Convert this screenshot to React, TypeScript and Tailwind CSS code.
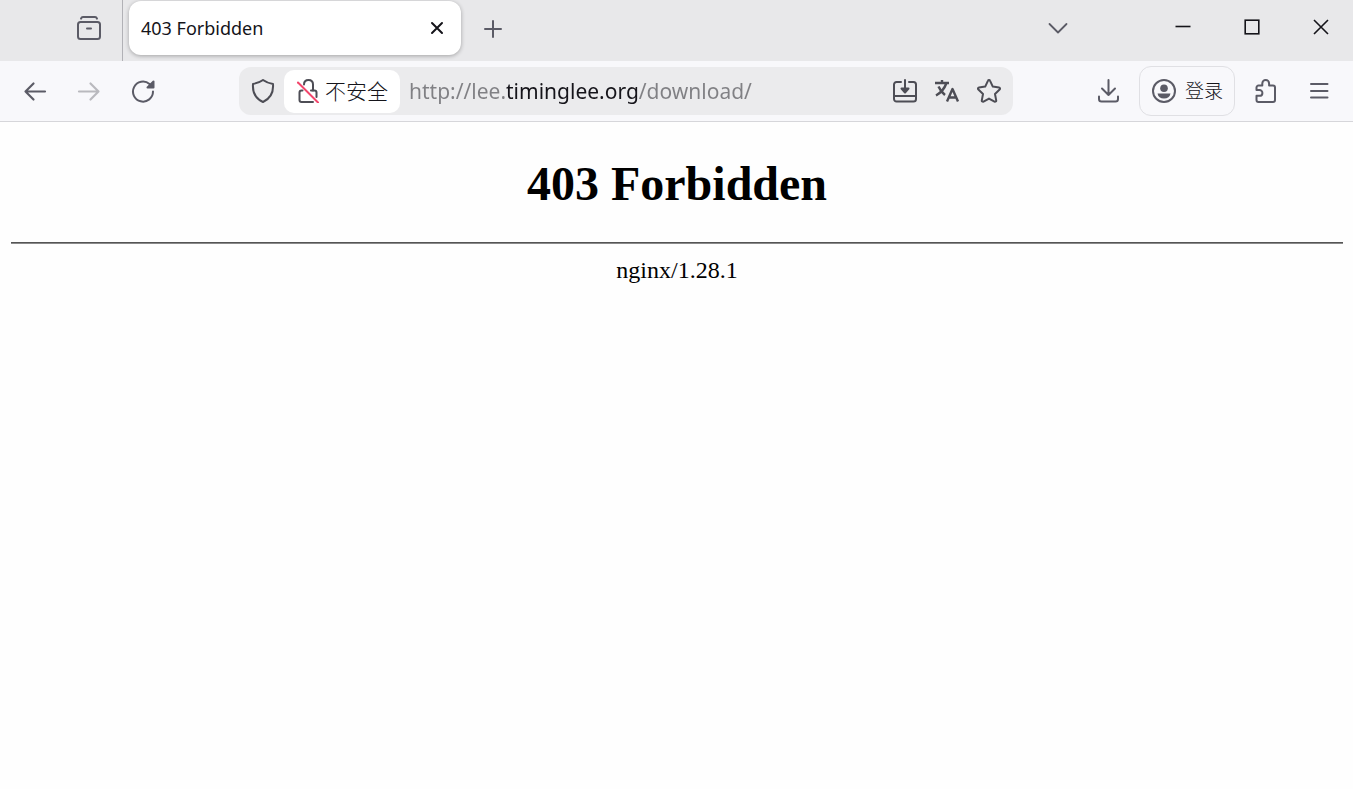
import type { ReactNode } from 'react';

const stroke = {
  fill: 'none',
  stroke: 'currentColor',
  strokeWidth: 2,
  strokeLinecap: 'round',
  strokeLinejoin: 'round',
} as const;

function Icon({ children }: { children: ReactNode }) {
  return (
    <svg viewBox="0 0 24 24" className="size-6 shrink-0" aria-hidden="true" {...stroke}>
      {children}
    </svg>
  );
}

function ToolButton({ label, children, disabled }: { label: string; children: ReactNode; disabled?: boolean }) {
  return (
    <button
      type="button"
      aria-label={label}
      disabled={disabled}
      className="flex h-12 w-[54px] items-center justify-center text-[#5b5b66] disabled:text-[#b9b9be]"
    >
      {children}
    </button>
  );
}

function UrlButton({ label, children }: { label: string; children: ReactNode }) {
  return (
    <button type="button" aria-label={label} className="flex h-12 w-[42px] items-center justify-center text-[#4d4d55]">
      {children}
    </button>
  );
}

function WindowButton({ label, children }: { label: string; children: ReactNode }) {
  return (
    <button type="button" aria-label={label} className="flex h-[53px] w-[69px] items-center justify-center pl-1">
      <svg viewBox="0 0 16 16" className="size-4" fill="none" stroke="#15141a" strokeWidth="1.6" aria-hidden="true">
        {children}
      </svg>
    </button>
  );
}

function TabStrip() {
  return (
    <div className="flex h-[61px] bg-[#e8e8ea]">
      <div className="flex w-[123px] items-center justify-end border-r border-[#b1b1b6] pr-1.5 pb-1.5">
        <ToolButton label="最近浏览">
          <Icon>
            <path d="M4 2.6C4.4 1.5 5 1 6 1h12c1 0 1.6.5 2 1.6" />
            <rect x="1" y="6" width="22" height="17" rx="2.5" />
            <path d="M10 12.5h4" />
          </Icon>
        </ToolButton>
      </div>

      <div role="tablist" className="flex pt-px pl-1.5">
        <div className="flex h-[54px] w-[332px] items-center justify-between rounded-xl bg-white px-3 shadow-[0_1px_4px_rgba(0,0,0,0.3)]">
          <button type="button" role="tab" aria-selected="true" className="text-lg text-[#15141a]">
            403 Forbidden
          </button>
          <button type="button" aria-label="关闭标签页" className="text-[#15141a]">
            <Icon>
              <path d="M7 7l10 10M17 7L7 17" />
            </Icon>
          </button>
        </div>
      </div>
      <div className="flex items-center pb-1 pl-[5px]">
        <ToolButton label="新建标签页">
          <Icon>
            <path d="M12 4v16M4 12h16" />
          </Icon>
        </ToolButton>
      </div>

      <div className="mr-[61px] ml-auto flex items-center pb-1.5">
        <ToolButton label="列出所有标签页">
          <Icon>
            <path d="M3.5 8l8.5 8.5L20.5 8" strokeWidth="1.8" />
          </Icon>
        </ToolButton>
      </div>
      <div className="flex">
        <WindowButton label="最小化">
          <path d="M0.5 7.5h15" />
        </WindowButton>
        <WindowButton label="最大化">
          <rect x="1.2" y="1.2" width="13.6" height="13.6" />
        </WindowButton>
        <WindowButton label="关闭">
          <path d="M1 1l14 14M15 1L1 15" />
        </WindowButton>
      </div>
    </div>
  );
}

function UrlBar() {
  return (
    <div className="mr-[68px] ml-[69px] flex h-12 flex-1 items-center rounded-xl bg-[#ebebed] pr-[3px]">
      <button type="button" aria-label="跟踪保护" className="flex w-[45px] justify-center pl-[3px] text-[#4d4d55]">
        <Icon>
          <path d="M12 1c3 2.2 6 3.3 10 4 .6 7.5-1.5 14-10 18C3.5 19 1.4 12.5 2 5c4-.7 7-1.8 10-4z" />
        </Icon>
      </button>
      <button type="button" className="flex h-[43px] w-[116px] items-center gap-[5px] rounded-[10px] bg-white pl-3 text-[#4d4d55]">
        <Icon>
          <path d="M8 5.5C8 2.8 9.8 1 12.500 1S17 2.8 17 5.5v6" />
          <path d="M15 11.5h3.5a2 2 0 0 1 2 2V18M6.5 11.5h-1a2 2 0 0 0-2 2V21a2 2 0 0 0 2 2H17" />
          <path d="M2 3.5l20 20" stroke="#f2456b" />
        </Icon>
        <span className="text-[21px] leading-6 font-light whitespace-nowrap text-[#15141a]">不安全</span>
      </button>
      {/* the host part is darker than the rest of the address */}
      <input
        type="text"
        aria-label="地址"
        defaultValue="http://lee.timinglee.org/download/"
        className="ml-[9px] h-10 min-w-0 flex-1 bg-[linear-gradient(to_right,#808084_97px,#15141a_97px,#15141a_229px,#808084_229px)] bg-clip-text text-[21px] text-transparent outline-none"
      />
      <UrlButton label="安装页面">
        <Icon>
          <path d="M8 3H3.5A2.500 2.500 0 0 0 1 5.5V20a2.500 2.500 0 0 0 2.500 2.500h17A2.500 2.500 0 0 0 23 20V5.5A2.500 2.500 0 0 0 20.5 3H16M1 17h22M12 1v9" />
          <path d="M8.5 9.5h7L12 13.5z" fill="currentColor" />
        </Icon>
      </UrlButton>
      <UrlButton label="翻译此页面">
        <Icon>
          <path
            d="M0 4h14M7 1v3M11.5 4C9.5 9.5 5.5 14 1 16.5M3.5 7.5c1.5 3.5 3.5 6 6.500 8.500M12 22.500L17.500 10 23 22.500M14 18.500h7.500"
            strokeWidth="2.4"
            strokeLinecap="butt"
          />
        </Icon>
      </UrlButton>
      <UrlButton label="为此页添加书签">
        <Icon>
          <path d="M10.9 1.8a1.2 1.2 0 0 1 2.2 0l2.7 5.8 6.2.8a1.2 1.2 0 0 1 .6 2.1L18 15l1.2 6.400a1.2 1.2 0 0 1-1.7 1.3L12 19.6l-5.5 3.1a1.2 1.2 0 0 1-1.7-1.3L6 15l-4.6-4.500A1.2 1.2 0 0 1 2 8.400l6.2-.8z" />
        </Icon>
      </UrlButton>
    </div>
  );
}

function Toolbar() {
  return (
    <div className="flex h-[61px] items-center border-b border-[#d6d6da] bg-[#f8f8fb] pr-1.5 pl-2">
      <ToolButton label="后退">
        <Icon>
          <path d="M22 12.500H2.500M10.500 4.500l-8 8 8 8" strokeWidth="2.2" />
        </Icon>
      </ToolButton>
      <ToolButton label="前进" disabled>
        <Icon>
          <path d="M2 12.500h19.500M13.500 4.500l8 8-8 8" strokeWidth="2.2" />
        </Icon>
      </ToolButton>
      <ToolButton label="重新载入">
        <Icon>
          <path d="M22 12.500A10 10 0 1 1 18.500 5l2 2" />
          <path d="M22.500 2.500v6H16.500z" fill="currentColor" />
        </Icon>
      </ToolButton>

      <UrlBar />

      <ToolButton label="下载">
        <Icon>
          <path d="M12.500 1v15M6 9.500l6.500 6.500L19 9.500M3 17.500V20a2.500 2.500 0 0 0 2.500 2.500h14A2.500 2.500 0 0 0 22 20v-2.500" />
        </Icon>
      </ToolButton>
      <button
        type="button"
        className="mx-1 flex h-[50px] w-24 items-center gap-[9px] rounded-xl border border-[#e0e0e4] pl-3 text-[#5b5b66]"
      >
        <Icon>
          <circle cx="12" cy="12" r="11" />
          <circle cx="12" cy="9.3" r="3.8" fill="currentColor" stroke="none" />
          <path d="M5.5 14.6h13c-.5 3.2-3 5-6.500 5s-6-1.800-6.500-5z" fill="currentColor" stroke="none" />
        </Icon>
        <span className="text-[19px] leading-6 font-light whitespace-nowrap text-[#15141a]">登录</span>
      </button>
      <ToolButton label="扩展">
        <Icon>
          <path d="M4.500 6.500h3.800V4.400a3.400 3.400 0 0 1 6.800 0v2.100H19a2 2 0 0 1 2 2V21a2 2 0 0 1-2 2H4.500a2 2 0 0 1-2-2v-4.200h3a2.900 2.900 0 0 0 0-5.800h-3V8.500a2 2 0 0 1 2-2z" />
        </Icon>
      </ToolButton>
      <ToolButton label="打开应用程序菜单">
        <Icon>
          <path d="M3 5h16.500M3 12h16.500M3 18.500h16.500" />
        </Icon>
      </ToolButton>
    </div>
  );
}

export default function App() {
  return (
    <div className="min-h-screen bg-[#fefefe] font-['Noto_Sans','Noto_Sans_CJK_SC',sans-serif]">
      <header>
        <TabStrip />
        <Toolbar />
      </header>
      <main className="pt-[34px] pr-2.5 pl-[11px] text-center font-['Liberation_Serif',serif] text-black">
        <h1 className="text-5xl leading-[56px] font-bold">403 Forbidden</h1>
        <hr className="mt-[30px] h-0.5 border-t border-b border-t-[#555555] border-b-[#8a8a8a]" />
        <p className="mt-3 text-2xl leading-7">nginx/1.28.1</p>
      </main>
    </div>
  );
}
